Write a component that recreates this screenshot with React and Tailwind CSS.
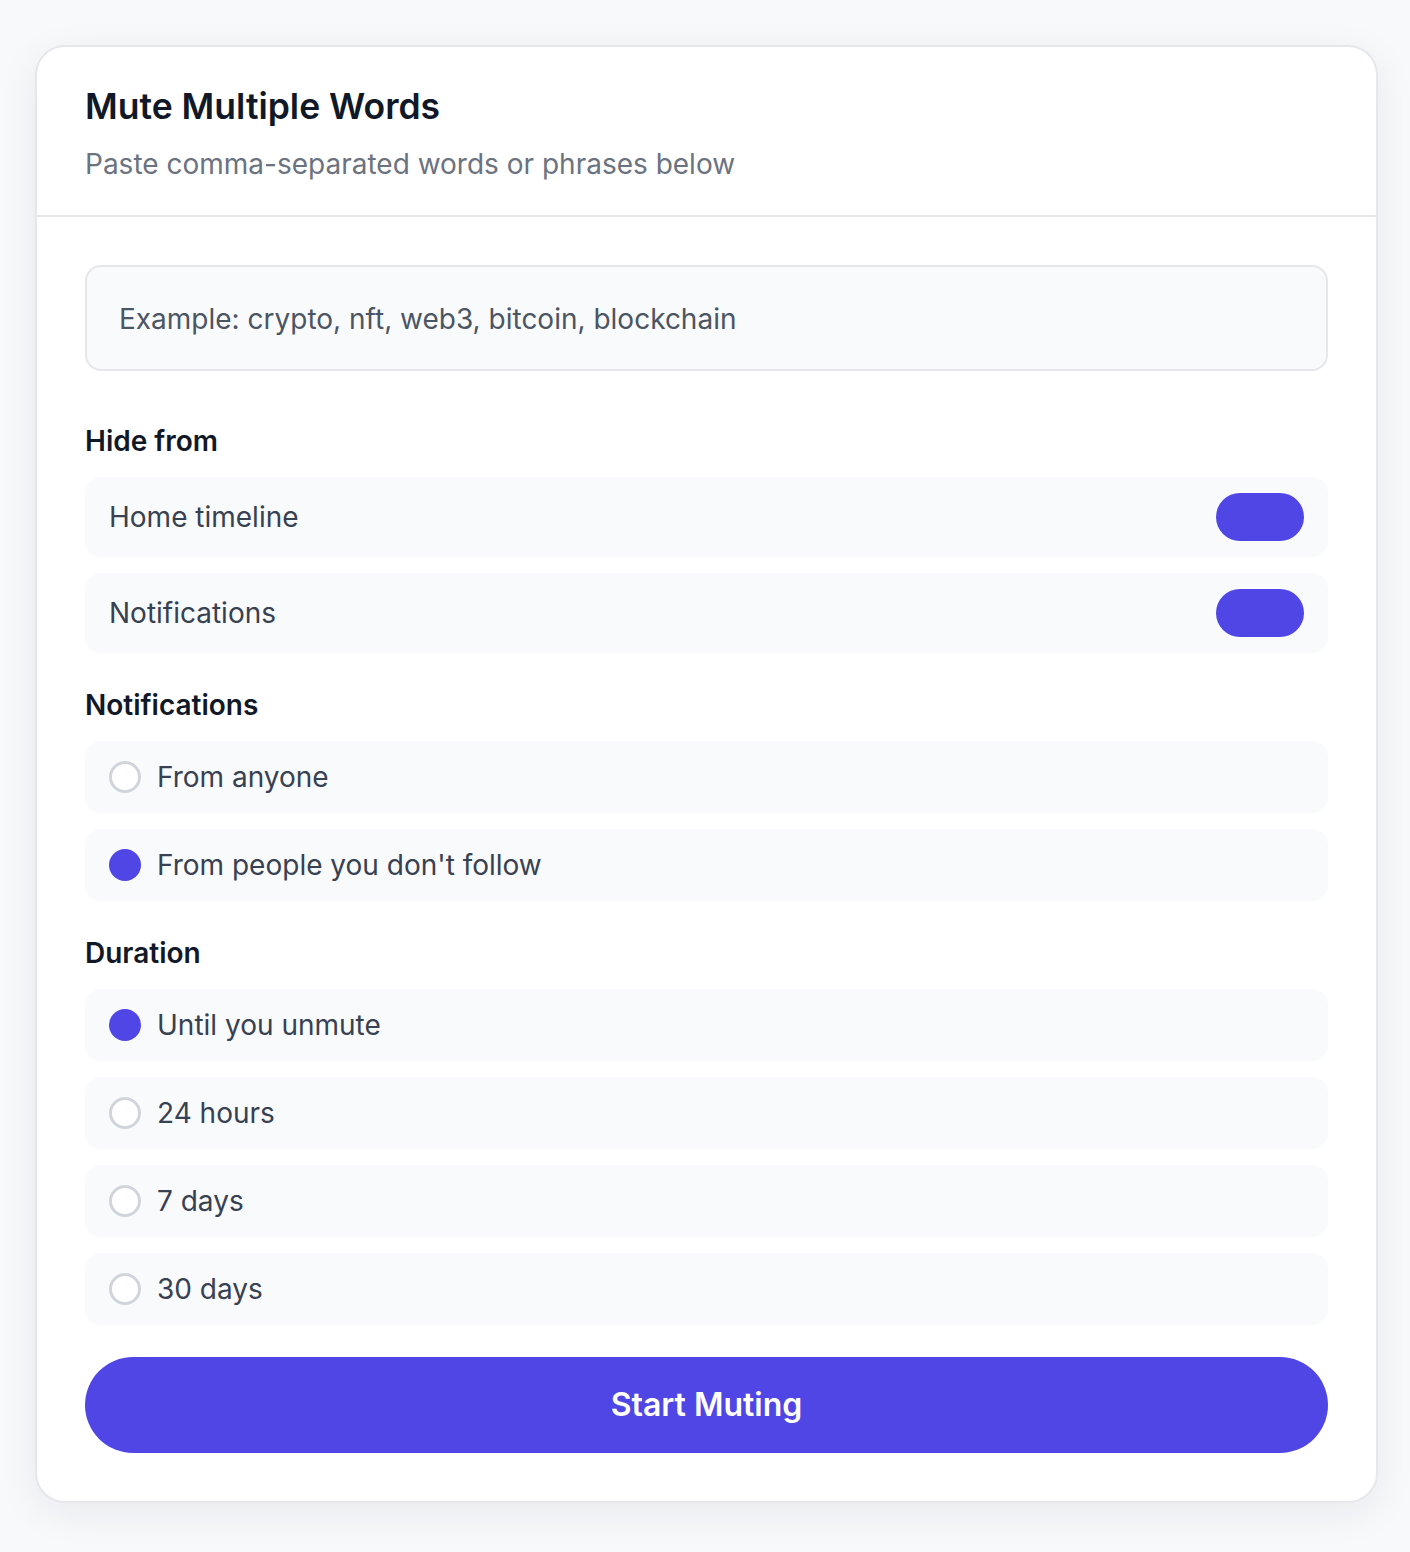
import React, { useState } from "react";

// ─── Toggle row (track only, as in the design) ───────────────────────────────
const ToggleRow = ({ label }) => (
  <div className="flex h-[80px] items-center justify-between rounded-2xl bg-[#f9fafb] px-6">
    <span className="text-[28px] leading-[40px] text-[#374151]">{label}</span>
    <span className="h-[48px] w-[88px] rounded-full bg-[#4f46e5]" />
  </div>
);

// ─── Radio row ───────────────────────────────────────────────────────────────
const RadioRow = ({ label, checked, onClick }) => (
  <button
    type="button"
    onClick={onClick}
    className="flex h-[72px] w-full items-center gap-4 rounded-2xl bg-[#f9fafb] px-6 text-left"
  >
    {checked ? (
      <span className="h-8 w-8 shrink-0 rounded-full bg-[#4f46e5]" />
    ) : (
      <span className="h-8 w-8 shrink-0 rounded-full border-[3px] border-[#d1d5db] bg-white" />
    )}
    <span className="text-[28px] leading-[40px] text-[#374151]">{label}</span>
  </button>
);

const SectionLabel = ({ children, className = "" }) => (
  <h3 className={`mb-4 text-[28px] font-semibold leading-[40px] text-[#111827] ${className}`}>
    {children}
  </h3>
);

export default function App() {
  const [words, setWords] = useState("");
  const [audience, setAudience] = useState("notFollowing");
  const [duration, setDuration] = useState("forever");

  const durations = [
    { key: "forever", label: "Until you unmute" },
    { key: "24h", label: "24 hours" },
    { key: "7d", label: "7 days" },
    { key: "30d", label: "30 days" },
  ];

  return (
    <div
      className="min-h-screen bg-[#f8f9fb] pb-[51px] pl-[35px] pr-[32px] pt-[45px]"
      style={{ fontFamily: "Inter, 'Noto Sans', sans-serif" }}
    >
      <div className="overflow-hidden rounded-[30px] border-2 border-[#e5e7eb] bg-white shadow-[0_10px_40px_rgba(17,24,39,0.07)]">
        {/* Header */}
        <div className="border-b-2 border-[#e5e7eb] px-[48px] pb-[31px] pt-[42px]">
          <h2 className="text-[35.5px] font-semibold leading-[36px] text-[#111827]">
            Mute Multiple Words
          </h2>
          <p className="mt-[19px] text-[28px] leading-[40px] text-[#6b7280]">
            Paste comma-separated words or phrases below
          </p>
        </div>

        {/* Body */}
        <div className="px-[48px] pb-[48px] pt-[48px]">
          <textarea
            rows={1}
            value={words}
            onChange={(e) => setWords(e.target.value)}
            placeholder="Example: crypto, nft, web3, bitcoin, blockchain"
            className="block h-[106px] w-full resize-none rounded-2xl border-2 border-[#e5e7eb] bg-[#f9fafb] px-8 pt-[32px] text-[28px] leading-[40px] text-[#374151] outline-none placeholder:text-[#4b5563]"
          />

          <SectionLabel className="mt-[50px]">Hide from</SectionLabel>
          <div className="flex flex-col gap-4">
            <ToggleRow label="Home timeline" />
            <ToggleRow label="Notifications" />
          </div>

          <SectionLabel className="mt-8">Notifications</SectionLabel>
          <div className="flex flex-col gap-4">
            <RadioRow
              label="From anyone"
              checked={audience === "anyone"}
              onClick={() => setAudience("anyone")}
            />
            <RadioRow
              label="From people you don't follow"
              checked={audience === "notFollowing"}
              onClick={() => setAudience("notFollowing")}
            />
          </div>

          <SectionLabel className="mt-8">Duration</SectionLabel>
          <div className="flex flex-col gap-4">
            {durations.map((d) => (
              <RadioRow
                key={d.key}
                label={d.label}
                checked={duration === d.key}
                onClick={() => setDuration(d.key)}
              />
            ))}
          </div>

          <button
            type="button"
            className="mt-8 flex h-[96px] w-full items-center justify-center rounded-full bg-[#4f46e5] text-[32px] font-semibold text-white"
          >
            Start Muting
          </button>
        </div>
      </div>
    </div>
  );
}
